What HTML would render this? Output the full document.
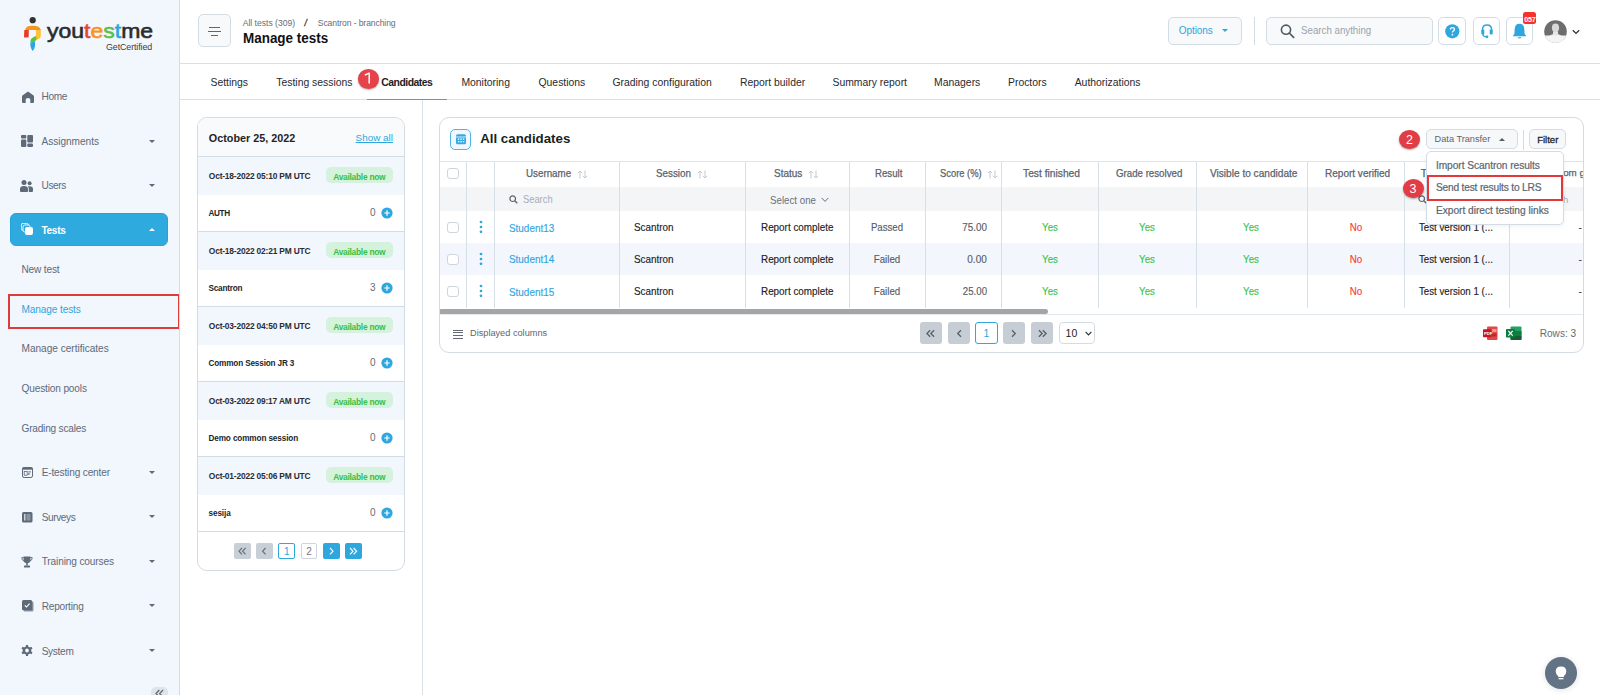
<!DOCTYPE html>
<html><head><meta charset="utf-8">
<style>
*{box-sizing:border-box;margin:0;padding:0}
html,body{width:1600px;height:695px;overflow:hidden;background:#fff;font-family:"Liberation Sans",sans-serif;color:#222}
.a{position:absolute}
.t{position:absolute;white-space:nowrap;line-height:1}
#sb{position:absolute;left:0;top:0;width:180px;height:695px;background:#f2f6fd;border-right:1px solid #d4dde6;overflow:hidden}
</style></head>
<body>
<div id="sb">
<svg class="a" style="left:18px;top:14px" width="28" height="40" viewBox="0 0 28 40">
      <circle cx="14.7" cy="6.2" r="3.1" fill="#323232"/>
      <path d="M7.3 16 C7.3 13.2 10.2 11.8 14.6 11.8 C19 11.8 22.5 13.2 22.7 16 L18 16 L10.8 16 Z" fill="#f7941d"/>
      <path d="M6.3 15.9 L10.8 15.9 L10.7 22.6 Q10.7 23.6 9.7 23.6 L6.6 23.6 Q6 23.6 6 22.9 Z" fill="#e63c23"/>
      <path d="M17.9 15.9 L22.8 15.9 L22.8 21.2 Q22.8 24.3 19.8 25.2 L17.9 25.7 Z" fill="#fdc332"/>
      <path d="M18.2 21.9 Q13.6 23.2 12.7 26 Q12.3 27.2 12.4 28.6 L17 27.8 Q17.4 26.2 19.2 25.4 L18.2 25.6 Z" fill="#5fc13f"/>
      <path d="M12.4 28.6 L17 27.8 L17 32 Q16.6 35 14.6 37.1 Q12.6 34.7 12.4 31.2 Z" fill="#2aa6e2"/>
    </svg>
<div class="t" style="left:47.3px;top:20.3px;font-size:21px;color:#2b2b2b;-webkit-text-stroke:0.6px currentColor;transform:scaleX(1.095);transform-origin:0 0">you<span style="color:#e8452c">t</span><span style="color:#f7931e">e</span><span style="color:#5cc045">s</span><span style="color:#29a8e0">t</span>me</div>
<div class="t" style="left:106.00px;top:43.31px;font-size:8.9px;color:#3d3d3d;letter-spacing:-0.1px">GetCertified</div>
<svg class="a" style="left:22px;top:90.5px" width="12" height="12" viewBox="0 0 12 12"><path d="M6 0.6 L11.6 4.6 Q12 5 12 5.6 V11 Q12 12 11 12 H8.3 V8.6 Q8.3 6.9 6 6.9 Q3.7 6.9 3.7 8.6 V12 H1 Q0 12 0 11 V5.6 Q0 5 0.4 4.6 Z" fill="#5e6a78"/></svg>
<div class="t" style="left:41.50px;top:92.13px;font-size:10.1px;color:#5e6a78;;letter-spacing:-0.350px">Home</div>
<svg class="a" style="left:21px;top:135px" width="12" height="12" viewBox="0 0 12 12"><rect x="0" y="0" width="5.3" height="3.6" rx="1" fill="#5e6a78"/><rect x="0" y="4.6" width="5.3" height="7.4" rx="1" fill="#5e6a78"/><rect x="6.3" y="0" width="5.7" height="7.4" rx="1" fill="#5e6a78"/><rect x="6.3" y="8.4" width="5.7" height="3.6" rx="1" fill="#5e6a78"/></svg>
<div class="t" style="left:41.50px;top:137.13px;font-size:10.1px;color:#5e6a78;;letter-spacing:-0.030px">Assignments</div>
<div class="a" style="left:149.1px;top:139.54999999999998px;width:0;height:0;border-left:3.5px solid transparent;border-right:3.5px solid transparent;border-top:3.5px solid #5e6a78"></div>
<svg class="a" style="left:20px;top:179.5px" width="13" height="12" viewBox="0 0 13 12"><circle cx="4" cy="2.6" r="2.5" fill="#5e6a78"/><circle cx="9.6" cy="3.3" r="2" fill="#5e6a78"/><path d="M0 11 V9 Q0 6 4 6 Q8 6 8 9 V11 Q8 12 7 12 H1 Q0 12 0 11Z" fill="#5e6a78"/><path d="M8.8 12 V9 Q8.8 7.3 7.8 6.6 Q8.5 6.2 9.6 6.2 Q13 6.2 13 9 V11 Q13 12 12 12Z" fill="#5e6a78"/></svg>
<div class="t" style="left:41.50px;top:181.23px;font-size:10.1px;color:#5e6a78;;letter-spacing:-0.388px">Users</div>
<div class="a" style="left:149.1px;top:183.54999999999998px;width:0;height:0;border-left:3.5px solid transparent;border-right:3.5px solid transparent;border-top:3.5px solid #5e6a78"></div>
<div class="a" style="left:10px;top:213.3px;width:158px;height:33px;background:#2eaadf;border-radius:6px;border:1px solid #24a2db"></div>
<svg class="a" style="left:21px;top:223.3px" width="12" height="12" viewBox="0 0 12 12"><rect x="0.3" y="0.3" width="7" height="7" rx="1.8" fill="none" stroke="#fff" stroke-width="0.9"/><rect x="2" y="2" width="7" height="7" rx="1.8" fill="#2eaadf" stroke="#fff" stroke-width="0.9"/><rect x="4" y="4" width="8" height="8" rx="2" fill="#fff"/></svg>
<div class="t" style="left:41.50px;top:225.83px;font-size:10.1px;color:#fff;font-weight:bold;;letter-spacing:-0.337px">Tests</div>
<div class="a" style="left:149.1px;top:227.85px;width:0;height:0;border-left:3.5px solid transparent;border-right:3.5px solid transparent;border-bottom:3.5px solid #fff"></div>
<div class="t" style="left:21.50px;top:265.23px;font-size:10.1px;color:#5e6a78;;letter-spacing:-0.171px">New test</div>
<div class="a" style="left:8px;top:294px;width:172px;height:35px;border:2px solid #e03a3a"></div>
<div class="t" style="left:21.50px;top:305.23px;font-size:10.1px;color:#2ea6de;;letter-spacing:-0.114px">Manage tests</div>
<div class="t" style="left:21.50px;top:344.43px;font-size:10.1px;color:#5e6a78;;letter-spacing:-0.017px">Manage certificates</div>
<div class="t" style="left:21.50px;top:384.43px;font-size:10.1px;color:#5e6a78;;letter-spacing:-0.146px">Question pools</div>
<div class="t" style="left:21.50px;top:423.53px;font-size:10.1px;color:#5e6a78;;letter-spacing:-0.204px">Grading scales</div>
<svg class="a" style="left:21.5px;top:467px" width="11" height="11" viewBox="0 0 11 11"><rect x="0.5" y="0.5" width="10" height="10" rx="1.6" fill="none" stroke="#5e6a78" stroke-width="1"/><rect x="0.5" y="0.5" width="10" height="2.2" fill="#5e6a78"/><rect x="2.2" y="4.4" width="3" height="3.8" fill="none" stroke="#5e6a78" stroke-width="0.8"/><rect x="6.3" y="4.4" width="2.6" height="1" fill="#5e6a78"/><rect x="6.3" y="6" width="1.2" height="2" fill="#5e6a78"/></svg>
<div class="t" style="left:41.70px;top:468.13px;font-size:10.1px;color:#5e6a78;;letter-spacing:-0.157px">E-testing center</div>
<div class="a" style="left:149.1px;top:470.95px;width:0;height:0;border-left:3.5px solid transparent;border-right:3.5px solid transparent;border-top:3.5px solid #5e6a78"></div>
<svg class="a" style="left:21.7px;top:512px" width="11" height="11" viewBox="0 0 11 11"><rect x="0" y="0" width="10.5" height="10.5" rx="1.5" fill="#5e6a78"/><rect x="2" y="2" width="1.5" height="6.5" fill="#c9d0d8"/><rect x="4.5" y="2" width="4" height="6.5" fill="#8a949f"/></svg>
<div class="t" style="left:41.70px;top:513.23px;font-size:10.1px;color:#5e6a78;;letter-spacing:-0.400px">Surveys</div>
<div class="a" style="left:149.1px;top:515.45px;width:0;height:0;border-left:3.5px solid transparent;border-right:3.5px solid transparent;border-top:3.5px solid #5e6a78"></div>
<svg class="a" style="left:20.5px;top:555.5px" width="12" height="12" viewBox="0 0 12 12"><path d="M2.5 0.5 H9.5 V4 Q9.5 7 6 7.3 Q2.5 7 2.5 4Z" fill="#5e6a78"/><path d="M2.6 1.5 H0.8 Q0.8 4.6 3 5" stroke="#5e6a78" stroke-width="0.9" fill="none"/><path d="M9.4 1.5 H11.2 Q11.2 4.6 9 5" stroke="#5e6a78" stroke-width="0.9" fill="none"/><rect x="5.2" y="7" width="1.6" height="2.5" fill="#5e6a78"/><rect x="3" y="9.5" width="6" height="2" rx="0.5" fill="#5e6a78"/></svg>
<div class="t" style="left:41.70px;top:557.43px;font-size:10.1px;color:#5e6a78;;letter-spacing:-0.133px">Training courses</div>
<div class="a" style="left:149.1px;top:559.95px;width:0;height:0;border-left:3.5px solid transparent;border-right:3.5px solid transparent;border-top:3.5px solid #5e6a78"></div>
<svg class="a" style="left:21.5px;top:599.5px" width="12" height="12" viewBox="0 0 12 12"><rect x="1.5" y="1.5" width="10" height="10" rx="1.5" fill="#8d97a2"/><rect x="0" y="0" width="10.2" height="10.2" rx="1.5" fill="#5e6a78"/><path d="M2.8 5.3 L4.5 7 L7.6 3.6" stroke="#fff" stroke-width="1.1" fill="none"/></svg>
<div class="t" style="left:41.70px;top:601.73px;font-size:10.1px;color:#5e6a78;;letter-spacing:-0.212px">Reporting</div>
<div class="a" style="left:149.1px;top:604.25px;width:0;height:0;border-left:3.5px solid transparent;border-right:3.5px solid transparent;border-top:3.5px solid #5e6a78"></div>
<svg class="a" style="left:21px;top:645px" width="12" height="12" viewBox="0 0 12 12"><path d="M5 0 H7 L7.3 1.7 Q8.2 2 8.9 2.5 L10.4 1.7 L11.5 3.5 L10.2 4.6 Q10.4 5.5 10.2 6.4 L11.5 7.5 L10.4 9.3 L8.9 8.5 Q8.2 9.1 7.3 9.3 L7 11 H5 L4.7 9.3 Q3.8 9 3.1 8.5 L1.6 9.3 L0.5 7.5 L1.8 6.4 Q1.6 5.5 1.8 4.6 L0.5 3.5 L1.6 1.7 L3.1 2.5 Q3.8 2 4.7 1.7 Z M6 3.6 A1.9 1.9 0 1 0 6 7.4 A1.9 1.9 0 1 0 6 3.6Z" fill="#5e6a78" fill-rule="evenodd"/></svg>
<div class="t" style="left:41.70px;top:646.53px;font-size:10.1px;color:#5e6a78;;letter-spacing:-0.310px">System</div>
<div class="a" style="left:149.1px;top:648.95px;width:0;height:0;border-left:3.5px solid transparent;border-right:3.5px solid transparent;border-top:3.5px solid #5e6a78"></div>
<div class="a" style="left:151.2px;top:687px;width:17px;height:16px;background:#dfe4eb;border-radius:5px"></div>
<svg class="a" style="left:151px;top:687px" width="17" height="12" viewBox="0 0 17 12"><path d="M8.3 3 L5 6.5 L8.3 10 M12 3 L8.7 6.5 L12 10" stroke="#5f6a76" stroke-width="1.3" fill="none"/></svg>
</div>
<div class="a" style="left:180px;top:63px;width:1420px;height:1px;background:#d9e1e8"></div>
<div class="a" style="left:180px;top:99px;width:1420px;height:1px;background:#d9e1e8"></div>
<div class="a" style="left:198px;top:14px;width:33px;height:33px;border:1px solid #d2dce5;border-radius:5px;background:#f7f9fb"></div>
<div class="a" style="left:209.2px;top:26.6px;width:10.6px;height:1.3px;background:#5f6670"></div>
<div class="a" style="left:207.8px;top:30.6px;width:13.6px;height:1.3px;background:#5f6670"></div>
<div class="a" style="left:210.8px;top:34.9px;width:7.6px;height:1.3px;background:#5f6670"></div>
<div class="t" style="left:242.70px;top:18.85px;font-size:8.6px;color:#666d75;;letter-spacing:-0.004px">All tests (309)</div>
<div class="t" style="left:304.60px;top:18.85px;font-size:8.6px;color:#333;font-style:italic;-webkit-text-stroke:0.3px currentColor">/</div>
<div class="t" style="left:317.80px;top:18.85px;font-size:8.6px;color:#666d75;;letter-spacing:-0.103px">Scantron - branching</div>
<div class="t" style="left:243.00px;top:31.45px;font-size:14px;color:#111;font-weight:bold;;transform:scaleX(0.9605);transform-origin:0 50%">Manage tests</div>
<div class="a" style="left:1168px;top:17px;width:74px;height:28px;border:1px solid #d2dce5;border-radius:5px;background:#f7f9fb"></div>
<div class="t" style="left:1178.80px;top:25.58px;font-size:10px;color:#2ea6de;;letter-spacing:-0.075px">Options</div>
<div class="a" style="left:1221.5px;top:29.1px;width:0;height:0;border-left:3.4px solid transparent;border-right:3.4px solid transparent;border-top:3.4px solid #2ea6de"></div>
<div class="a" style="left:1254px;top:17px;width:1px;height:28px;background:#d2dce5"></div>
<div class="a" style="left:1266px;top:17px;width:167px;height:28px;border:1px solid #d2dce5;border-radius:5px;background:#f7f9fb"></div>
<svg class="a" style="left:1279px;top:23px" width="16" height="16" viewBox="0 0 16 16"><circle cx="7" cy="6.7" r="4.6" fill="none" stroke="#4f5862" stroke-width="1.6"/><path d="M10.3 10 L14.6 14.3" stroke="#4f5862" stroke-width="1.7" stroke-linecap="round"/></svg>
<div class="t" style="left:1301.00px;top:25.69px;font-size:10.4px;color:#9aa3ad;;transform:scaleX(0.9355);transform-origin:0 50%">Search anything</div>
<div class="a" style="left:1438px;top:17px;width:28.3px;height:27.5px;border:1px solid #d2dce5;border-radius:5px;background:#fff"></div>
<div class="a" style="left:1472.5px;top:17px;width:27px;height:27.5px;border:1px solid #d2dce5;border-radius:5px;background:#fff"></div>
<div class="a" style="left:1506.2px;top:17px;width:26.6px;height:27.5px;border:1px solid #d2dce5;border-radius:5px;background:#fff"></div>
<svg class="a" style="left:1445px;top:23.5px" width="15" height="15" viewBox="0 0 15 15"><circle cx="7.3" cy="7.3" r="7.1" fill="#2ea6de"/><path d="M5.3 5.6 Q5.3 3.6 7.4 3.6 Q9.4 3.6 9.4 5.4 Q9.4 6.5 8.2 7.1 Q7.4 7.5 7.4 8.6" stroke="#fff" stroke-width="1.3" fill="none"/><circle cx="7.4" cy="10.7" r="0.85" fill="#fff"/></svg>
<svg class="a" style="left:1481px;top:24px" width="12" height="15" viewBox="0 0 12 15"><path d="M1.5 7.5 V5.5 Q1.5 1 6 1 Q10.5 1 10.5 5.5 V7.5" stroke="#2ea6de" stroke-width="1.5" fill="none"/><rect x="0.3" y="5.6" width="3" height="5" rx="1" fill="#2ea6de"/><rect x="8.7" y="5.6" width="3" height="5" rx="1" fill="#2ea6de"/><path d="M1.8 10 Q2 12.6 5 12.8" stroke="#2ea6de" stroke-width="1.2" fill="none"/><circle cx="6" cy="12.8" r="1.4" fill="#2ea6de"/></svg>
<svg class="a" style="left:1512px;top:22.5px" width="15" height="17" viewBox="0 0 15 17"><path d="M7.5 0.8 Q12 0.8 12.3 6 L12.6 10.8 L14.3 13.2 H0.7 L2.4 10.8 L2.7 6 Q3 0.8 7.5 0.8Z" fill="#2ea6de"/><path d="M5.3 14.2 Q7.5 16.8 9.7 14.2Z" fill="#2ea6de"/></svg>
<div class="a" style="left:1523.2px;top:12.2px;width:13px;height:12.3px;background:#f5332b;border-radius:2.5px"></div>
<div class="t" style="left:1524.20px;top:15.73px;font-size:7.2px;color:#fff;font-weight:bold;letter-spacing:-0.2px">057</div>
<svg class="a" style="left:1544px;top:19.5px" width="23" height="23" viewBox="0 0 23 23"><defs><clipPath id="av"><circle cx="11.5" cy="11.5" r="11.3"/></clipPath></defs><circle cx="11.5" cy="11.5" r="11.3" fill="#6d6d6d"/><g clip-path="url(#av)"><ellipse cx="11.5" cy="7.8" rx="3.6" ry="4.4" fill="#d8d8d8"/><path d="M9 11.5 L9 14 Q3 15.5 2 23 H21 Q20 15.5 14 14 L14 11.5Z" fill="#e6e6e6"/><rect x="0" y="15.5" width="23" height="8" fill="#f4f4f4"/></g></svg>
<svg class="a" style="left:1571.5px;top:28.5px" width="8" height="6" viewBox="0 0 8 6"><path d="M0.8 1.2 L4 4.4 L7.2 1.2" stroke="#333" stroke-width="1.3" fill="none"/></svg>
<div class="t" style="left:210.50px;top:77.69px;font-size:10.4px;color:#262a2e;">Settings</div>
<div class="t" style="left:276.30px;top:77.69px;font-size:10.4px;color:#262a2e;">Testing sessions</div>
<div class="t" style="left:461.40px;top:77.69px;font-size:10.4px;color:#262a2e;">Monitoring</div>
<div class="t" style="left:538.50px;top:77.69px;font-size:10.4px;color:#262a2e;">Questions</div>
<div class="t" style="left:612.40px;top:77.69px;font-size:10.4px;color:#262a2e;">Grading configuration</div>
<div class="t" style="left:739.90px;top:77.69px;font-size:10.4px;color:#262a2e;">Report builder</div>
<div class="t" style="left:832.50px;top:77.69px;font-size:10.4px;color:#262a2e;">Summary report</div>
<div class="t" style="left:934.10px;top:77.69px;font-size:10.4px;color:#262a2e;">Managers</div>
<div class="t" style="left:1008.00px;top:77.69px;font-size:10.4px;color:#262a2e;">Proctors</div>
<div class="t" style="left:1074.70px;top:77.69px;font-size:10.4px;color:#262a2e;">Authorizations</div>
<div class="t" style="left:381.30px;top:77.69px;font-size:10.4px;color:#1d2125;font-weight:bold;;letter-spacing:-0.506px">Candidates</div>
<div class="a" style="left:367px;top:98.5px;width:80px;height:1.5px;background:#35aadf"></div>
<div class="a" style="left:357.8px;top:69.3px;width:21px;height:19.5px;background:#e64249;border-radius:50%;box-shadow:0 1px 2px rgba(0,0,0,0.3)"></div>
<svg class="a" style="left:363px;top:72px" width="9" height="13" viewBox="0 0 9 13"><path d="M6.2 0.9 V11.6" stroke="#fff" stroke-width="1.5"/><path d="M6.6 0.8 L1.8 3.2" stroke="#fff" stroke-width="1.3"/></svg>
<div class="a" style="left:422px;top:100px;width:1px;height:595px;background:#d9e1e8"></div>
<div class="a" style="left:197px;top:117px;width:208px;height:454px;border:1px solid #d2dce5;border-radius:10px;overflow:hidden;background:#fff">
<div class="a" style="left:0px;top:0px;width:206px;height:39px;background:#f8fafc"></div>
<div class="a" style="left:0px;top:38.5px;width:206px;height:1px;background:#d2dce5"></div>
</div>
<div class="t" style="left:208.80px;top:133.49px;font-size:10.8px;color:#1f2327;font-weight:bold;">October 25, 2022</div>
<div class="t" style="left:355.60px;top:133.03px;font-size:9.9px;color:#2ea6de;text-decoration:underline">Show all</div>
<div class="a" style="left:198px;top:156px;width:206px;height:38.5px;background:#f2f6fd"></div>
<div class="t" style="left:208.80px;top:172.05px;font-size:8.4px;color:#2a2e33;font-weight:bold;;letter-spacing:-0.170px">Oct-18-2022 05:10 PM UTC</div>
<div class="a" style="left:325.9px;top:167.3px;width:66.8px;height:15.6px;background:#d5f2dc;border-radius:5px"></div>
<div class="t" style="left:333.20px;top:172.65px;font-size:8.4px;color:#35bf47;font-weight:bold;;letter-spacing:-0.258px">Available now</div>
<div class="t" style="left:208.50px;top:209.65px;font-size:8.2px;color:#22262a;font-weight:bold;;letter-spacing:-0.383px">AUTH</div>
<div class="t" style="left:370.00px;top:208.18px;font-size:10px;color:#666c73;">0</div>
<svg class="a" style="left:380.7px;top:206.5px" width="12" height="12" viewBox="0 0 12 12"><circle cx="6" cy="6" r="5.6" fill="#2ea6de"/><path d="M6 3.3 V8.7 M3.3 6 H8.7" stroke="#fff" stroke-width="1.2"/></svg>
<div class="a" style="left:198px;top:231px;width:206px;height:38.5px;background:#f2f6fd"></div>
<div class="t" style="left:208.80px;top:247.05px;font-size:8.4px;color:#2a2e33;font-weight:bold;;letter-spacing:-0.170px">Oct-18-2022 02:21 PM UTC</div>
<div class="a" style="left:325.9px;top:242.3px;width:66.8px;height:15.6px;background:#d5f2dc;border-radius:5px"></div>
<div class="t" style="left:333.20px;top:247.65px;font-size:8.4px;color:#35bf47;font-weight:bold;;letter-spacing:-0.258px">Available now</div>
<div class="t" style="left:208.50px;top:284.65px;font-size:8.2px;color:#22262a;font-weight:bold;;letter-spacing:-0.221px">Scantron</div>
<div class="t" style="left:370.00px;top:283.18px;font-size:10px;color:#666c73;">3</div>
<svg class="a" style="left:380.7px;top:281.5px" width="12" height="12" viewBox="0 0 12 12"><circle cx="6" cy="6" r="5.6" fill="#2ea6de"/><path d="M6 3.3 V8.7 M3.3 6 H8.7" stroke="#fff" stroke-width="1.2"/></svg>
<div class="a" style="left:198px;top:306px;width:206px;height:38.5px;background:#f2f6fd"></div>
<div class="t" style="left:208.80px;top:322.05px;font-size:8.4px;color:#2a2e33;font-weight:bold;;letter-spacing:-0.170px">Oct-03-2022 04:50 PM UTC</div>
<div class="a" style="left:325.9px;top:317.3px;width:66.8px;height:15.6px;background:#d5f2dc;border-radius:5px"></div>
<div class="t" style="left:333.20px;top:322.65px;font-size:8.4px;color:#35bf47;font-weight:bold;;letter-spacing:-0.258px">Available now</div>
<div class="t" style="left:208.50px;top:359.65px;font-size:8.2px;color:#22262a;font-weight:bold;;letter-spacing:-0.158px">Common Session JR 3</div>
<div class="t" style="left:370.00px;top:358.18px;font-size:10px;color:#666c73;">0</div>
<svg class="a" style="left:380.7px;top:356.5px" width="12" height="12" viewBox="0 0 12 12"><circle cx="6" cy="6" r="5.6" fill="#2ea6de"/><path d="M6 3.3 V8.7 M3.3 6 H8.7" stroke="#fff" stroke-width="1.2"/></svg>
<div class="a" style="left:198px;top:381px;width:206px;height:38.5px;background:#f2f6fd"></div>
<div class="t" style="left:208.80px;top:397.05px;font-size:8.4px;color:#2a2e33;font-weight:bold;;letter-spacing:-0.176px">Oct-03-2022 09:17 AM UTC</div>
<div class="a" style="left:325.9px;top:392.3px;width:66.8px;height:15.6px;background:#d5f2dc;border-radius:5px"></div>
<div class="t" style="left:333.20px;top:397.65px;font-size:8.4px;color:#35bf47;font-weight:bold;;letter-spacing:-0.258px">Available now</div>
<div class="t" style="left:208.50px;top:434.65px;font-size:8.2px;color:#22262a;font-weight:bold;;letter-spacing:-0.125px">Demo common session</div>
<div class="t" style="left:370.00px;top:433.18px;font-size:10px;color:#666c73;">0</div>
<svg class="a" style="left:380.7px;top:431.5px" width="12" height="12" viewBox="0 0 12 12"><circle cx="6" cy="6" r="5.6" fill="#2ea6de"/><path d="M6 3.3 V8.7 M3.3 6 H8.7" stroke="#fff" stroke-width="1.2"/></svg>
<div class="a" style="left:198px;top:456px;width:206px;height:38.5px;background:#f2f6fd"></div>
<div class="t" style="left:208.80px;top:472.05px;font-size:8.4px;color:#2a2e33;font-weight:bold;;letter-spacing:-0.170px">Oct-01-2022 05:06 PM UTC</div>
<div class="a" style="left:325.9px;top:467.3px;width:66.8px;height:15.6px;background:#d5f2dc;border-radius:5px"></div>
<div class="t" style="left:333.20px;top:472.65px;font-size:8.4px;color:#35bf47;font-weight:bold;;letter-spacing:-0.258px">Available now</div>
<div class="t" style="left:208.50px;top:509.65px;font-size:8.2px;color:#22262a;font-weight:bold;;letter-spacing:-0.100px">sesija</div>
<div class="t" style="left:370.00px;top:508.18px;font-size:10px;color:#666c73;">0</div>
<svg class="a" style="left:380.7px;top:506.5px" width="12" height="12" viewBox="0 0 12 12"><circle cx="6" cy="6" r="5.6" fill="#2ea6de"/><path d="M6 3.3 V8.7 M3.3 6 H8.7" stroke="#fff" stroke-width="1.2"/></svg>
<div class="a" style="left:198px;top:156px;width:206px;height:1px;background:#d2dce5"></div>
<div class="a" style="left:198px;top:231px;width:206px;height:1px;background:#d2dce5"></div>
<div class="a" style="left:198px;top:306px;width:206px;height:1px;background:#d2dce5"></div>
<div class="a" style="left:198px;top:381px;width:206px;height:1px;background:#d2dce5"></div>
<div class="a" style="left:198px;top:456px;width:206px;height:1px;background:#d2dce5"></div>
<div class="a" style="left:198px;top:531px;width:206px;height:1px;background:#d2dce5"></div>
<div class="a" style="left:234.2px;top:543px;width:16.6px;height:16.3px;background:#c8cfd6;border-radius:2px"></div>
<svg class="a" style="left:234.2px;top:543px" width="16.6" height="16.3" viewBox="0 0 16.6 16.3"><path d="M8 5 L5 8.2 L8 11.4 M11.6 5 L8.6 8.2 L11.6 11.4" stroke="#66707a" stroke-width="1.15" fill="none"/></svg>
<div class="a" style="left:256px;top:543px;width:16.6px;height:16.3px;background:#c8cfd6;border-radius:2px"></div>
<svg class="a" style="left:256px;top:543px" width="16.6" height="16.3" viewBox="0 0 16.6 16.3"><path d="M9.6 5 L6.6 8.2 L9.6 11.4" stroke="#66707a" stroke-width="1.15" fill="none"/></svg>
<div class="a" style="left:278.4px;top:543px;width:16.6px;height:16.3px;background:#fff;border:1px solid #2ea6de;border-radius:2px"></div>
<div class="t" style="left:86.70px;width:400px;text-align:center;top:547.28px;font-size:10px;color:#2ea6de;">1</div>
<div class="a" style="left:300.8px;top:543px;width:16.6px;height:16.3px;background:#fff;border:1px solid #ccd5dd;border-radius:2px"></div>
<div class="t" style="left:109.10px;width:400px;text-align:center;top:547.28px;font-size:10px;color:#777;">2</div>
<div class="a" style="left:323px;top:543px;width:16.6px;height:16.3px;background:#2ea6de;border-radius:2px"></div>
<svg class="a" style="left:323px;top:543px" width="16.6" height="16.3" viewBox="0 0 16.6 16.3"><path d="M7 5 L10 8.2 L7 11.4" stroke="#fff" stroke-width="1.15" fill="none"/></svg>
<div class="a" style="left:345px;top:543px;width:16.6px;height:16.3px;background:#2ea6de;border-radius:2px"></div>
<svg class="a" style="left:345px;top:543px" width="16.6" height="16.3" viewBox="0 0 16.6 16.3"><path d="M5 5 L8 8.2 L5 11.4 M8.6 5 L11.6 8.2 L8.6 11.4" stroke="#fff" stroke-width="1.15" fill="none"/></svg>
<div class="a" style="left:439px;top:117px;width:1145px;height:236px;border:1px solid #d2dce5;border-radius:10px;background:#fff;overflow:hidden">
<div class="a" style="left:-1px;top:43px;width:1145px;height:1px;background:#dfe5eb"></div>
<div class="a" style="left:-1px;top:68.5px;width:1145px;height:24.7px;background:#f3f5f7"></div>
<div class="a" style="left:-1px;top:125px;width:1145px;height:32px;background:#f3f6fc"></div>
<div class="a" style="left:26.30000000000001px;top:44px;width:1px;height:145.5px;background:#d7dfe7"></div>
<div class="a" style="left:53.80000000000001px;top:44px;width:1px;height:145.5px;background:#d7dfe7"></div>
<div class="a" style="left:178.79999999999995px;top:44px;width:1px;height:145.5px;background:#d7dfe7"></div>
<div class="a" style="left:304.79999999999995px;top:44px;width:1px;height:145.5px;background:#d7dfe7"></div>
<div class="a" style="left:408.5px;top:44px;width:1px;height:145.5px;background:#d7dfe7"></div>
<div class="a" style="left:485px;top:44px;width:1px;height:145.5px;background:#d7dfe7"></div>
<div class="a" style="left:561.4px;top:44px;width:1px;height:145.5px;background:#d7dfe7"></div>
<div class="a" style="left:658.4000000000001px;top:44px;width:1px;height:145.5px;background:#d7dfe7"></div>
<div class="a" style="left:755.9000000000001px;top:44px;width:1px;height:145.5px;background:#d7dfe7"></div>
<div class="a" style="left:866.8px;top:44px;width:1px;height:145.5px;background:#d7dfe7"></div>
<div class="a" style="left:964.3px;top:44px;width:1px;height:145.5px;background:#d7dfe7"></div>
<div class="a" style="left:1068.6px;top:44px;width:1px;height:145.5px;background:#d7dfe7"></div>
<div class="a" style="left:-1px;top:190.5px;width:609px;height:5.6px;background:#a5a5a5;border-radius:3px"></div>
<div class="a" style="left:-1px;top:196px;width:1145px;height:1px;background:#e3e8ed"></div>
</div>
<div class="a" style="left:450px;top:129.2px;width:21px;height:20.6px;border:1.5px solid #4fb4e6;border-radius:5px;background:#f1f7fc"></div>
<svg class="a" style="left:456px;top:134px" width="10" height="10.5" viewBox="0 0 10 10.5"><rect x="0" y="0.3" width="10" height="10" rx="1.6" fill="#35a8e0"/><rect x="0" y="2.6" width="10" height="0.8" fill="#fff"/><g fill="#fff"><rect x="1.8" y="4.5" width="1.5" height="1.3"/><rect x="4.3" y="4.5" width="1.5" height="1.3"/><rect x="6.8" y="4.5" width="1.5" height="1.3"/><rect x="1.8" y="7" width="1.5" height="1.3"/><rect x="4.3" y="7" width="1.5" height="1.3"/><rect x="6.8" y="7" width="1.5" height="1.3"/></g></svg>
<div class="t" style="left:480.20px;top:132.19px;font-size:13.3px;color:#1b1f23;font-weight:bold;">All candidates</div>
<div class="t" style="left:525.90px;top:167.64px;font-size:10.5px;color:#59636e;-webkit-text-stroke:0.25px currentColor;transform:scaleX(0.9309);transform-origin:0 50%">Username</div>
<svg class="a" style="left:576.9px;top:170.4px" width="11" height="9" viewBox="0 0 11 9"><path d="M3 8.5 V1 M0.8 3.2 L3 1 L5.2 3.2" stroke="#c3cbd3" stroke-width="1" fill="none"/><path d="M8 0.5 V8 M5.8 5.8 L8 8 L10.2 5.8" stroke="#c3cbd3" stroke-width="1" fill="none"/></svg>
<div class="t" style="left:655.90px;top:167.64px;font-size:10.5px;color:#59636e;-webkit-text-stroke:0.25px currentColor;transform:scaleX(0.9344);transform-origin:0 50%">Session</div>
<svg class="a" style="left:696.9px;top:170.4px" width="11" height="9" viewBox="0 0 11 9"><path d="M3 8.5 V1 M0.8 3.2 L3 1 L5.2 3.2" stroke="#c3cbd3" stroke-width="1" fill="none"/><path d="M8 0.5 V8 M5.8 5.8 L8 8 L10.2 5.8" stroke="#c3cbd3" stroke-width="1" fill="none"/></svg>
<div class="t" style="left:773.90px;top:167.64px;font-size:10.5px;color:#59636e;-webkit-text-stroke:0.25px currentColor;transform:scaleX(0.9513);transform-origin:0 50%">Status</div>
<svg class="a" style="left:807.6px;top:170.4px" width="11" height="9" viewBox="0 0 11 9"><path d="M3 8.5 V1 M0.8 3.2 L3 1 L5.2 3.2" stroke="#c3cbd3" stroke-width="1" fill="none"/><path d="M8 0.5 V8 M5.8 5.8 L8 8 L10.2 5.8" stroke="#c3cbd3" stroke-width="1" fill="none"/></svg>
<div class="t" style="left:874.50px;top:167.64px;font-size:10.5px;color:#59636e;-webkit-text-stroke:0.25px currentColor;transform:scaleX(0.9210);transform-origin:0 50%">Result</div>
<div class="t" style="left:939.70px;top:167.64px;font-size:10.5px;color:#59636e;-webkit-text-stroke:0.25px currentColor;transform:scaleX(0.8929);transform-origin:0 50%">Score (%)</div>
<svg class="a" style="left:987px;top:170.4px" width="11" height="9" viewBox="0 0 11 9"><path d="M3 8.5 V1 M0.8 3.2 L3 1 L5.2 3.2" stroke="#c3cbd3" stroke-width="1" fill="none"/><path d="M8 0.5 V8 M5.8 5.8 L8 8 L10.2 5.8" stroke="#c3cbd3" stroke-width="1" fill="none"/></svg>
<div class="t" style="left:1023.00px;top:167.64px;font-size:10.5px;color:#59636e;-webkit-text-stroke:0.25px currentColor;transform:scaleX(0.9769);transform-origin:0 50%">Test finished</div>
<div class="t" style="left:1115.50px;top:167.64px;font-size:10.5px;color:#59636e;-webkit-text-stroke:0.25px currentColor;transform:scaleX(0.9234);transform-origin:0 50%">Grade resolved</div>
<div class="t" style="left:1210.40px;top:167.64px;font-size:10.5px;color:#59636e;-webkit-text-stroke:0.25px currentColor;transform:scaleX(0.9620);transform-origin:0 50%">Visible to candidate</div>
<div class="t" style="left:1324.60px;top:167.64px;font-size:10.5px;color:#59636e;-webkit-text-stroke:0.25px currentColor;transform:scaleX(0.9546);transform-origin:0 50%">Report verified</div>
<div class="t" style="left:1420.80px;top:167.64px;font-size:10.5px;color:#59636e;-webkit-text-stroke:0.25px currentColor">Test version</div>
<div class="a" style="left:1509px;top:150px;width:74px;height:200px;overflow:hidden">
<div class="t" style="left:34.00px;top:17.98px;font-size:9.8px;color:#59636e;-webkit-text-stroke:0.25px currentColor">Custom grade</div>
<div class="t" style="left:29.00px;top:45.07px;font-size:9.6px;color:#a6adb5;">Search</div>
<div class="t" style="left:69.40px;top:73.28px;font-size:10px;color:#333;">-</div>
<div class="t" style="left:69.40px;top:104.98px;font-size:10px;color:#333;">-</div>
<div class="t" style="left:69.40px;top:137.28px;font-size:10px;color:#333;">-</div>
</div>
<div class="a" style="left:447px;top:168px;width:11.8px;height:11px;border:1px solid #cdd5dd;border-radius:3px;background:#fff"></div>
<svg class="a" style="left:508.5px;top:194.5px" width="9" height="9" viewBox="0 0 9 9"><circle cx="3.7" cy="3.7" r="2.8" fill="none" stroke="#59636e" stroke-width="1.2"/><path d="M5.7 5.7 L8.3 8.3" stroke="#59636e" stroke-width="1.3"/></svg>
<div class="t" style="left:522.80px;top:193.79px;font-size:10.6px;color:#a6adb5;;transform:scaleX(0.8810);transform-origin:0 50%">Search</div>
<div class="t" style="left:769.80px;top:194.59px;font-size:10.6px;color:#67717b;;transform:scaleX(0.9182);transform-origin:0 50%">Select one</div>
<svg class="a" style="left:820.5px;top:196.8px" width="8" height="5.5" viewBox="0 0 8 5.5"><path d="M0.6 0.9 L4 4.4 L7.4 0.9" stroke="#67717b" stroke-width="1" fill="none"/></svg>
<svg class="a" style="left:1418.2px;top:194.5px" width="9" height="9" viewBox="0 0 9 9"><circle cx="3.7" cy="3.7" r="2.8" fill="none" stroke="#59636e" stroke-width="1.2"/><path d="M5.7 5.7 L8.3 8.3" stroke="#59636e" stroke-width="1.3"/></svg>
<div class="a" style="left:447px;top:222.0px;width:11.8px;height:11px;border:1px solid #cdd5dd;border-radius:3px;background:#fff"></div>
<svg class="a" style="left:478.9px;top:220.3px" width="4" height="14" viewBox="0 0 4 14"><circle cx="2" cy="2" r="1.35" fill="#2ea6de"/><circle cx="2" cy="7" r="1.35" fill="#2ea6de"/><circle cx="2" cy="11.8" r="1.35" fill="#2ea6de"/></svg>
<div class="t" style="left:508.50px;top:222.70px;font-size:11.2px;color:#2ea6de;-webkit-text-stroke:0.15px currentColor;transform:scaleX(0.8854);transform-origin:0 50%">Student13</div>
<div class="t" style="left:633.60px;top:221.80px;font-size:11.2px;color:#222;-webkit-text-stroke:0.15px currentColor;transform:scaleX(0.8829);transform-origin:0 50%">Scantron</div>
<div class="t" style="left:760.50px;top:221.80px;font-size:11.2px;color:#222;-webkit-text-stroke:0.15px currentColor;transform:scaleX(0.8825);transform-origin:0 50%">Report complete</div>
<div class="t" style="left:686.90px;width:400px;text-align:center;top:221.80px;font-size:11.2px;color:#555d66;-webkit-text-stroke:0.15px currentColor;transform:scaleX(0.8621);transform-origin:50% 50%">Passed</div>
<div class="t" style="right:612.80px;top:221.80px;font-size:11.2px;color:#555d66;-webkit-text-stroke:0.15px currentColor;transform:scaleX(0.8806);transform-origin:100% 50%">75.00</div>
<div class="t" style="left:850.20px;width:400px;text-align:center;top:221.80px;font-size:11.2px;color:#3cc34d;-webkit-text-stroke:0.15px currentColor;transform:scaleX(0.8658);transform-origin:50% 50%">Yes</div>
<div class="t" style="left:947.40px;width:400px;text-align:center;top:221.80px;font-size:11.2px;color:#3cc34d;-webkit-text-stroke:0.15px currentColor;transform:scaleX(0.8658);transform-origin:50% 50%">Yes</div>
<div class="t" style="left:1051.40px;width:400px;text-align:center;top:221.80px;font-size:11.2px;color:#3cc34d;-webkit-text-stroke:0.15px currentColor;transform:scaleX(0.8658);transform-origin:50% 50%">Yes</div>
<div class="t" style="left:1156.20px;width:400px;text-align:center;top:221.80px;font-size:11.2px;color:#f63d36;-webkit-text-stroke:0.15px currentColor;transform:scaleX(0.8741);transform-origin:50% 50%">No</div>
<div class="t" style="left:1419.40px;top:221.80px;font-size:11.2px;color:#222;-webkit-text-stroke:0.15px currentColor;transform:scaleX(0.8669);transform-origin:0 50%">Test version 1 (...</div>
<div class="a" style="left:447px;top:253.7px;width:11.8px;height:11px;border:1px solid #cdd5dd;border-radius:3px;background:#fff"></div>
<svg class="a" style="left:478.9px;top:252px" width="4" height="14" viewBox="0 0 4 14"><circle cx="2" cy="2" r="1.35" fill="#2ea6de"/><circle cx="2" cy="7" r="1.35" fill="#2ea6de"/><circle cx="2" cy="11.8" r="1.35" fill="#2ea6de"/></svg>
<div class="t" style="left:508.50px;top:254.40px;font-size:11.2px;color:#2ea6de;-webkit-text-stroke:0.15px currentColor;transform:scaleX(0.8854);transform-origin:0 50%">Student14</div>
<div class="t" style="left:633.60px;top:253.50px;font-size:11.2px;color:#222;-webkit-text-stroke:0.15px currentColor;transform:scaleX(0.8829);transform-origin:0 50%">Scantron</div>
<div class="t" style="left:760.50px;top:253.50px;font-size:11.2px;color:#222;-webkit-text-stroke:0.15px currentColor;transform:scaleX(0.8825);transform-origin:0 50%">Report complete</div>
<div class="t" style="left:686.90px;width:400px;text-align:center;top:253.50px;font-size:11.2px;color:#555d66;-webkit-text-stroke:0.15px currentColor;transform:scaleX(0.8689);transform-origin:50% 50%">Failed</div>
<div class="t" style="right:612.80px;top:253.50px;font-size:11.2px;color:#555d66;-webkit-text-stroke:0.15px currentColor;transform:scaleX(0.8945);transform-origin:100% 50%">0.00</div>
<div class="t" style="left:850.20px;width:400px;text-align:center;top:253.50px;font-size:11.2px;color:#3cc34d;-webkit-text-stroke:0.15px currentColor;transform:scaleX(0.8658);transform-origin:50% 50%">Yes</div>
<div class="t" style="left:947.40px;width:400px;text-align:center;top:253.50px;font-size:11.2px;color:#3cc34d;-webkit-text-stroke:0.15px currentColor;transform:scaleX(0.8658);transform-origin:50% 50%">Yes</div>
<div class="t" style="left:1051.40px;width:400px;text-align:center;top:253.50px;font-size:11.2px;color:#3cc34d;-webkit-text-stroke:0.15px currentColor;transform:scaleX(0.8658);transform-origin:50% 50%">Yes</div>
<div class="t" style="left:1156.20px;width:400px;text-align:center;top:253.50px;font-size:11.2px;color:#f63d36;-webkit-text-stroke:0.15px currentColor;transform:scaleX(0.8741);transform-origin:50% 50%">No</div>
<div class="t" style="left:1419.40px;top:253.50px;font-size:11.2px;color:#222;-webkit-text-stroke:0.15px currentColor;transform:scaleX(0.8669);transform-origin:0 50%">Test version 1 (...</div>
<div class="a" style="left:447px;top:286.0px;width:11.8px;height:11px;border:1px solid #cdd5dd;border-radius:3px;background:#fff"></div>
<svg class="a" style="left:478.9px;top:284.3px" width="4" height="14" viewBox="0 0 4 14"><circle cx="2" cy="2" r="1.35" fill="#2ea6de"/><circle cx="2" cy="7" r="1.35" fill="#2ea6de"/><circle cx="2" cy="11.8" r="1.35" fill="#2ea6de"/></svg>
<div class="t" style="left:508.50px;top:286.70px;font-size:11.2px;color:#2ea6de;-webkit-text-stroke:0.15px currentColor;transform:scaleX(0.8854);transform-origin:0 50%">Student15</div>
<div class="t" style="left:633.60px;top:285.80px;font-size:11.2px;color:#222;-webkit-text-stroke:0.15px currentColor;transform:scaleX(0.8829);transform-origin:0 50%">Scantron</div>
<div class="t" style="left:760.50px;top:285.80px;font-size:11.2px;color:#222;-webkit-text-stroke:0.15px currentColor;transform:scaleX(0.8825);transform-origin:0 50%">Report complete</div>
<div class="t" style="left:686.90px;width:400px;text-align:center;top:285.80px;font-size:11.2px;color:#555d66;-webkit-text-stroke:0.15px currentColor;transform:scaleX(0.8689);transform-origin:50% 50%">Failed</div>
<div class="t" style="right:612.80px;top:285.80px;font-size:11.2px;color:#555d66;-webkit-text-stroke:0.15px currentColor;transform:scaleX(0.8627);transform-origin:100% 50%">25.00</div>
<div class="t" style="left:850.20px;width:400px;text-align:center;top:285.80px;font-size:11.2px;color:#3cc34d;-webkit-text-stroke:0.15px currentColor;transform:scaleX(0.8658);transform-origin:50% 50%">Yes</div>
<div class="t" style="left:947.40px;width:400px;text-align:center;top:285.80px;font-size:11.2px;color:#3cc34d;-webkit-text-stroke:0.15px currentColor;transform:scaleX(0.8658);transform-origin:50% 50%">Yes</div>
<div class="t" style="left:1051.40px;width:400px;text-align:center;top:285.80px;font-size:11.2px;color:#3cc34d;-webkit-text-stroke:0.15px currentColor;transform:scaleX(0.8658);transform-origin:50% 50%">Yes</div>
<div class="t" style="left:1156.20px;width:400px;text-align:center;top:285.80px;font-size:11.2px;color:#f63d36;-webkit-text-stroke:0.15px currentColor;transform:scaleX(0.8741);transform-origin:50% 50%">No</div>
<div class="t" style="left:1419.40px;top:285.80px;font-size:11.2px;color:#222;-webkit-text-stroke:0.15px currentColor;transform:scaleX(0.8669);transform-origin:0 50%">Test version 1 (...</div>
<div class="a" style="left:453px;top:329.5px;width:10px;height:1.15px;background:#636a72"></div>
<div class="a" style="left:453px;top:332.2px;width:10px;height:1.15px;background:#636a72"></div>
<div class="a" style="left:453px;top:334.9px;width:10px;height:1.15px;background:#636a72"></div>
<div class="a" style="left:453px;top:337.6px;width:10px;height:1.15px;background:#636a72"></div>
<div class="t" style="left:470.00px;top:328.87px;font-size:9.2px;color:#5c6672;">Displayed columns</div>
<div class="a" style="left:920px;top:322px;width:21.8px;height:22px;background:#c6cdd5;border-radius:3px"></div>
<svg class="a" style="left:923.4px;top:325.5px" width="15" height="15" viewBox="0 0 15 15"><path d="M7.199999999999999 4.2 L3.9000000000000004 7.5 L7.199999999999999 10.799999999999999 M11.1 4.2 L7.800000000000001 7.5 L11.1 10.799999999999999" stroke="#56606a" stroke-width="1.3" fill="none"/></svg>
<div class="a" style="left:948.2px;top:322px;width:21.8px;height:22px;background:#c6cdd5;border-radius:3px"></div>
<svg class="a" style="left:951.6px;top:325.5px" width="15" height="15" viewBox="0 0 15 15"><path d="M9.0 4.2 L5.7 7.5 L9.0 10.799999999999999" stroke="#56606a" stroke-width="1.3" fill="none"/></svg>
<div class="a" style="left:1003px;top:322px;width:21.8px;height:22px;background:#c6cdd5;border-radius:3px"></div>
<svg class="a" style="left:1006.4px;top:325.5px" width="15" height="15" viewBox="0 0 15 15"><path d="M6.0 4.2 L9.3 7.5 L6.0 10.799999999999999" stroke="#56606a" stroke-width="1.3" fill="none"/></svg>
<div class="a" style="left:1031.2px;top:322px;width:21.8px;height:22px;background:#c6cdd5;border-radius:3px"></div>
<svg class="a" style="left:1034.6000000000001px;top:325.5px" width="15" height="15" viewBox="0 0 15 15"><path d="M3.9000000000000004 4.2 L7.199999999999999 7.5 L3.9000000000000004 10.799999999999999 M7.800000000000001 4.2 L11.1 7.5 L7.800000000000001 10.799999999999999" stroke="#56606a" stroke-width="1.3" fill="none"/></svg>
<div class="a" style="left:975.2px;top:322px;width:22.6px;height:22px;border:1.5px solid #2ea6de;border-radius:3px;background:#fff"></div>
<div class="t" style="left:786.50px;width:400px;text-align:center;top:327.94px;font-size:10.5px;color:#2ea6de;">1</div>
<div class="a" style="left:1059px;top:322px;width:35.5px;height:22px;border:1px solid #d2dce5;border-radius:4px;background:#fff"></div>
<div class="t" style="left:1065.60px;top:327.94px;font-size:10.5px;color:#222;">10</div>
<svg class="a" style="left:1084.5px;top:330.8px" width="7" height="5" viewBox="0 0 7 5"><path d="M0.6 0.8 L3.5 3.8 L6.4 0.8" stroke="#333" stroke-width="1.2" fill="none"/></svg>
<svg class="a" style="left:1483px;top:325.8px" width="15" height="14.5" viewBox="0 0 15 14.5"><rect x="4" y="0.5" width="10.5" height="13.5" rx="1" fill="#e04848"/><rect x="9" y="3" width="4.5" height="3" fill="#f59a9a"/><rect x="9" y="7.5" width="4.5" height="3" fill="#c02828"/><rect x="0" y="3.2" width="8.5" height="8" rx="0.8" fill="#c8161e"/><text x="1" y="9" font-size="4.2" fill="#fff" font-family="Liberation Sans" font-weight="bold">PDF</text></svg>
<svg class="a" style="left:1505.5px;top:325.8px" width="16" height="14.5" viewBox="0 0 16 14.5"><rect x="4.5" y="0.5" width="11" height="13.5" rx="1" fill="#21a366"/><rect x="4.5" y="5" width="11" height="4.5" fill="#107c41"/><rect x="4.5" y="9.5" width="11" height="4.5" rx="1" fill="#185c37"/><rect x="0" y="3" width="9" height="8.5" rx="0.8" fill="#0f7b3f"/><path d="M2.3 4.8 L6.7 9.7 M6.7 4.8 L2.3 9.7" stroke="#fff" stroke-width="1.2"/></svg>
<div class="t" style="left:1539.70px;top:329.03px;font-size:10.1px;color:#666c73;">Rows: 3</div>
<div class="a" style="left:1398.9px;top:129.9px;width:21px;height:19px;background:#e23d44;border-radius:50%;box-shadow:0 1px 2px rgba(0,0,0,0.35)"></div>
<div class="t" style="left:1405.90px;top:134.18px;font-size:12.5px;color:#fff;">2</div>
<div class="a" style="left:1425.6px;top:129.2px;width:92px;height:20.2px;border:1px solid #d2dce5;border-radius:5px;background:#f6f8fa"></div>
<div class="t" style="left:1434.60px;top:135.37px;font-size:9.2px;color:#5b6570;">Data Transfer</div>
<div class="a" style="left:1499.1000000000001px;top:137.89999999999998px;width:0;height:0;border-left:3.6px solid transparent;border-right:3.6px solid transparent;border-bottom:3.6px solid #555d66"></div>
<div class="a" style="left:1523.3px;top:129.5px;width:1px;height:20px;background:#d2dce5"></div>
<div class="a" style="left:1529.2px;top:129.2px;width:36.5px;height:20.2px;border:1px solid #d2dce5;border-radius:5px;background:#f6f8fa"></div>
<div class="t" style="left:1537.20px;top:134.82px;font-size:9.5px;color:#222;-webkit-text-stroke:0.3px currentColor">Filter</div>
<div class="a" style="left:1425.6px;top:150.9px;width:138.2px;height:74.4px;border:1px solid #d2dce5;border-radius:5px;background:#fff;box-shadow:0 2px 4px rgba(0,0,0,0.05)"></div>
<div class="t" style="left:1435.90px;top:160.58px;font-size:10.2px;color:#5b6570;-webkit-text-stroke:0.2px currentColor;letter-spacing:-0.061px">Import Scantron results</div>
<div class="t" style="left:1435.90px;top:182.88px;font-size:10.2px;color:#5b6570;-webkit-text-stroke:0.2px currentColor;letter-spacing:-0.187px">Send test results to LRS</div>
<div class="t" style="left:1435.90px;top:206.28px;font-size:10.2px;color:#5b6570;-webkit-text-stroke:0.2px currentColor;letter-spacing:-0.012px">Export direct testing links</div>
<div class="a" style="left:1426.5px;top:174.5px;width:136.5px;height:26.6px;border:2.6px solid #e3383a"></div>
<div class="a" style="left:1402.5px;top:178.9px;width:21px;height:19px;background:#e23d44;border-radius:50%;box-shadow:0 1px 2px rgba(0,0,0,0.35)"></div>
<div class="t" style="left:1409.50px;top:183.18px;font-size:12.5px;color:#fff;">3</div>
<div class="a" style="left:1545px;top:657px;width:32px;height:32px;border-radius:50%;background:#627385;box-shadow:0 1px 6px rgba(0,0,0,0.12)"></div>
<svg class="a" style="left:1555px;top:666px" width="12" height="15" viewBox="0 0 12 15"><path d="M6 0.5 Q11.3 0.5 11.3 5.5 Q11.3 8 9 10 L8.6 11 H3.4 L3 10 Q0.7 8 0.7 5.5 Q0.7 0.5 6 0.5Z" fill="#fff"/><rect x="3.6" y="12" width="4.8" height="1.3" fill="#fff"/></svg>
</body></html>
